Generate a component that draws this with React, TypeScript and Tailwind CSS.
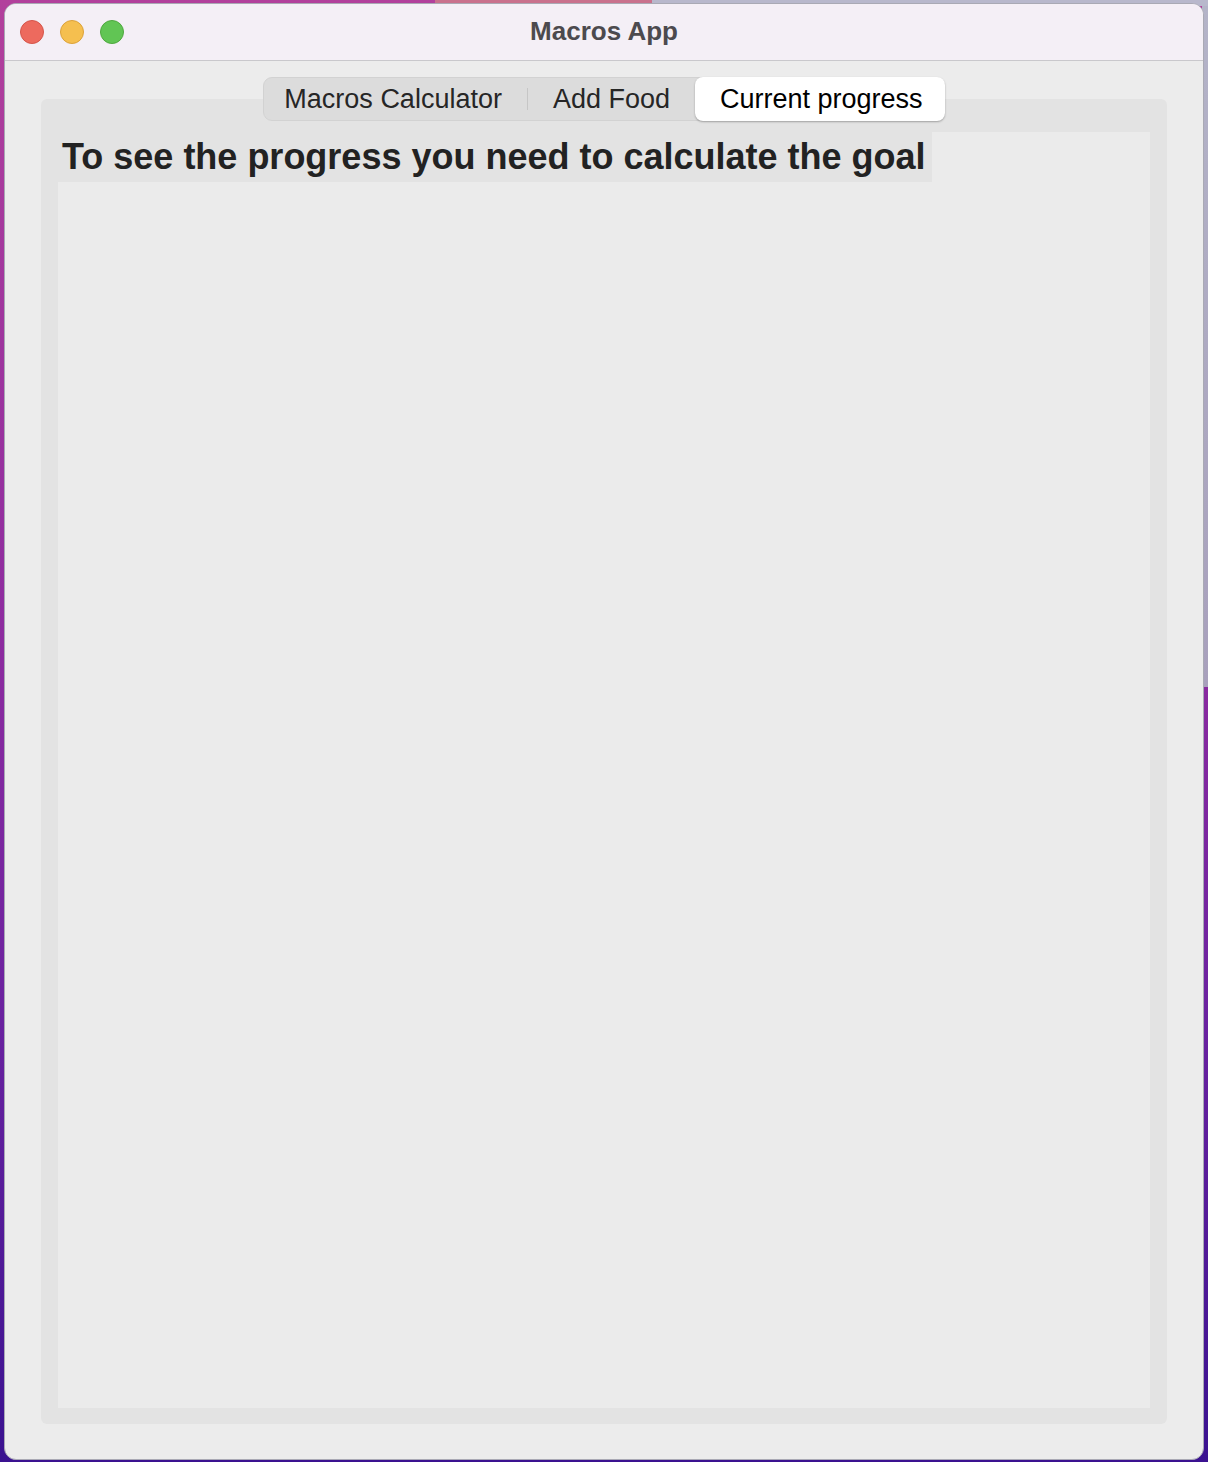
import React from "react";

export default function App() {
  return (
    <div className="w-[1208px] h-[1462px] pt-[3px] px-[4px] pb-[2px] [background:linear-gradient(90deg,transparent_0_36%,#c9718d_36%_54%,#b8b8cc_54%)_top/100%_6px_no-repeat,linear-gradient(180deg,#b4b4c8_0%,#a8a0bc_100%)_right_top/6px_47%_no-repeat,linear-gradient(180deg,#b2409c_0%,#8c2ba0_45%,#6a22a0_70%,#3a1290_100%)]">
      <div className="w-full h-full rounded-[12px] border border-[#a9a9b4] bg-[#ececec] overflow-hidden flex flex-col font-['Liberation_Sans',Arial,sans-serif]">
        {/* title bar */}
        <div className="h-[57px] shrink-0 bg-[#f4eff6] border-b border-[#c9c8cc] flex items-center relative">
          <div className="flex items-center gap-[16px] pl-[15px]">
            <span className="w-[24px] h-[24px] rounded-full bg-[#ed6a5e] border border-[#d5554a]" />
            <span className="w-[24px] h-[24px] rounded-full bg-[#f5bf4f] border border-[#dca23a]" />
            <span className="w-[24px] h-[24px] rounded-full bg-[#61c554] border border-[#4fa83f]" />
          </div>
          <div className="absolute inset-0 flex items-center justify-center text-[26px] font-bold text-[#4c4a4e] pb-[1px]">
            Macros App
          </div>
        </div>
        {/* content */}
        <div className="flex-1 flex flex-col px-[36px] pt-[16px] pb-[35px]">
          <div className="relative z-10 flex justify-center">
            <div className="h-[44px] flex items-stretch rounded-[9px] bg-[#dcdcdc] border border-[#d2d2d2] text-[27px] text-[#262626]">
              <div className="flex items-center pl-[20px] pr-[25px]">Macros Calculator</div>
              <div className="w-[1px] my-[10px] bg-[#c6c6c6]" />
              <div className="flex items-center pl-[25px] pr-[25px]">Add Food</div>
              <div className="flex items-center pl-[25px] pr-[22px] bg-white rounded-[8px] shadow-[0_1px_2px_rgba(0,0,0,0.3)] text-black -my-[1px] -mr-[1px]">
                Current progress
              </div>
            </div>
          </div>
          <div className="-mt-[22px] flex-1 rounded-[6px] bg-[#e3e3e3] pt-[33px] px-[17px] pb-[16px] flex">
            <div className="flex-1 bg-[#ebebeb] flex flex-col items-start">
              <div className="h-[50px] bg-[#e3e3e3] pl-[4px] pr-[6px] flex items-center text-[36px] font-bold text-[#222222] leading-none">
                To see the progress you need to calculate the goal
              </div>
            </div>
          </div>
        </div>
      </div>
    </div>
  );
}
